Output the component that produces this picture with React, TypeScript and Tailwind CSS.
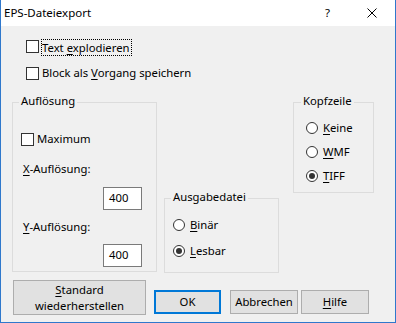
import React from 'react';

const font = "font-['Noto_Sans','Liberation_Sans',sans-serif]";

const CheckBox = () => (
  <span className="w-[13px] h-[13px] shrink-0 border border-[#333333] bg-white" />
);

const Radio = ({ checked }: { checked?: boolean }) => (
  <span className="w-[12px] h-[12px] shrink-0 rounded-full border border-[#333333] bg-white flex items-center justify-center">
    {checked && <span className="w-[6px] h-[6px] rounded-full bg-[#333333]" />}
  </span>
);

const Group = ({
  title,
  titleLeft,
  className,
  children,
}: {
  title: string;
  titleLeft: string;
  className: string;
  children?: React.ReactNode;
}) => (
  <div className={`relative shrink-0 border border-[#dcdcdc] flex flex-col ${className}`}>
    <span className={`absolute -top-[10px] ${titleLeft} px-[2px] bg-[#f0f0f0] leading-[16px]`}>
      {title}
    </span>
    {children}
  </div>
);

const RadioRow = ({ u, rest, checked, className }: { u: string; rest: string; checked?: boolean; className: string }) => (
  <div className={`flex items-center h-[16px] ${className}`}>
    <Radio checked={checked} />
    <span className="ml-[5px] leading-[16px]">
      <span className="underline underline-offset-2">{u}</span>
      {rest}
    </span>
  </div>
);

const NumberBox = ({ className }: { className: string }) => (
  <div className={`w-[39px] h-[23px] border border-[#7a7a7a] bg-white flex items-center pl-[5px] ${className}`}>
    400
  </div>
);

export default function App() {
  return (
    <div className={`w-[396px] h-[323px] bg-[#f0f0f0] border-x border-b border-[#2f78cc] flex flex-col text-[11.3px] text-black ${font}`}>
      {/* title bar */}
      <div className="h-[26px] shrink-0 bg-white flex items-center pl-[3px] text-[11.5px]">
        <span className="leading-[16px]">EPS-Dateiexport</span>
        <span className="ml-auto leading-[16px]">?</span>
        <svg width="10" height="10" viewBox="0 0 10 10" className="ml-[37px] mr-[18px]">
          <path d="M0.5 0.5 L9.5 9.5 M9.5 0.5 L0.5 9.5" stroke="#000" strokeWidth="1" fill="none" />
        </svg>
      </div>

      {/* top checkboxes */}
      <div className="flex items-center h-[16px] mt-[12px] pl-[25px]">
        <CheckBox />
        <span className="ml-[2px] h-[17px] mt-[2px] border border-dotted border-black leading-[15px] pr-[1px]">
          Text <span className="underline underline-offset-2">e</span>xplodieren
        </span>
      </div>
      <div className="flex items-center h-[16px] mt-[11px] pl-[25px]">
        <CheckBox />
        <span className="ml-[3px] leading-[16px]">
          Block als <span className="underline underline-offset-2">V</span>organg speichern
        </span>
      </div>

      {/* groups */}
      <div className="flex items-start mt-[21px]">
        <Group title="Auflösung" titleLeft="left-[6px]" className="ml-[11px] w-[145px] h-[170px]">
          <div className="flex items-center h-[16px] mt-[28px] pl-[8px]">
            <CheckBox />
            <span className="ml-[3px] leading-[16px]">Maximum</span>
          </div>
          <div className="h-[16px] mt-[14px] pl-[10px] leading-[16px]">
            <span className="underline underline-offset-2">X</span>-Auflösung:
          </div>
          <NumberBox className="ml-[90px] mt-[10px]" />
          <div className="h-[16px] mt-[9px] pl-[10px] leading-[16px]">
            <span className="underline underline-offset-2">Y</span>-Auflösung:
          </div>
          <NumberBox className="ml-[90px] mt-[9px]" />
        </Group>

        <Group title="Ausgabedatei" titleLeft="left-[6px]" className="ml-[7px] mt-[96px] w-[115px] h-[75px]">
          <RadioRow u="B" rest="inär" className="mt-[18px] pl-[8px]" />
          <RadioRow u="L" rest="esbar" checked className="mt-[10px] pl-[8px]" />
        </Group>

        <Group title="Kopfzeile" titleLeft="left-[7px]" className="ml-[14px] w-[81px] h-[91px]">
          <RadioRow u="K" rest="eine" className="mt-[17px] pl-[12px]" />
          <RadioRow u="W" rest="MF" className="mt-[8px] pl-[12px]" />
          <RadioRow u="T" rest="IFF" checked className="mt-[8px] pl-[12px]" />
        </Group>
      </div>

      {/* buttons */}
      <div className="flex items-start mt-[7px]">
        <button className="ml-[12px] w-[133px] h-[35px] border border-[#adadad] bg-[#e1e1e1] leading-[16px] text-center flex flex-col items-center justify-center">
          <span>
            <span className="underline underline-offset-2">S</span>tandard
          </span>
          <span>wiederherstellen</span>
        </button>
        <button className="ml-[8px] mt-[10px] w-[67px] h-[24px] border-2 border-[#0078d7] bg-[#e1e1e1] leading-[16px]">
          OK
        </button>
        <button className="ml-[9px] mt-[10px] w-[68px] h-[24px] border border-[#adadad] bg-[#e1e1e1] leading-[16px]">
          Abbrechen
        </button>
        <button className="ml-[3px] mt-[10px] w-[68px] h-[24px] border border-[#adadad] bg-[#e1e1e1] leading-[16px]">
          <span className="underline underline-offset-2">H</span>ilfe
        </button>
      </div>
    </div>
  );
}
